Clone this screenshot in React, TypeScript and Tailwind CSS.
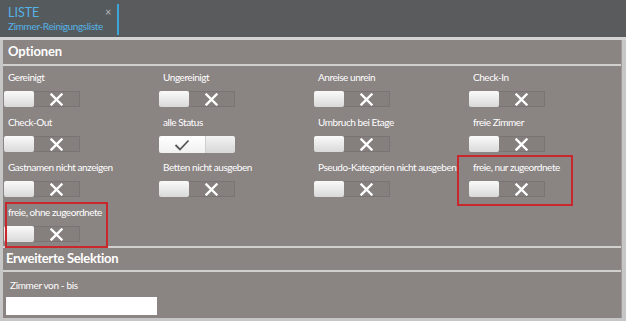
import React from "react";

const font = { fontFamily: 'Lato, "Noto Sans", sans-serif' };

function XIcon() {
  return (
    <svg width="13" height="13" viewBox="0 0 13 13">
      <path d="M1.5 1.5 L11.5 11.5 M11.5 1.5 L1.5 11.5" stroke="#ffffff" strokeWidth="2.4" strokeLinecap="square" />
    </svg>
  );
}

function CheckIcon() {
  return (
    <svg width="16" height="12" viewBox="0 0 16 12">
      <path d="M1.5 6 L6 10.5 L14.5 1.5" stroke="#555555" strokeWidth="1.8" fill="none" />
    </svg>
  );
}

function Toggle({ on }: { on?: boolean }) {
  if (on) {
    return (
      <div className="flex h-[17px] w-[76px]">
        <div className="flex w-[46px] items-center justify-center bg-gradient-to-b from-white to-[#f0f0f0] rounded-l-[2px]">
          <CheckIcon />
        </div>
        <div className="w-[30px] bg-gradient-to-b from-[#f2f2f2] to-[#d8d8d8] rounded-r-[2px] border-l border-[#cfcfcf]" />
      </div>
    );
  }
  return (
    <div className="flex h-[16px] w-[76px]">
      <div className="w-[30px] rounded-[2px] bg-gradient-to-b from-[#fafafa] to-[#d9d9d9]" />
      <div className="flex w-[46px] items-center justify-center border border-l-0 border-[#7a7574] bg-[#857f7e]">
        <XIcon />
      </div>
    </div>
  );
}

const options: { label: string; on?: boolean }[] = [
  { label: "Gereinigt" },
  { label: "Ungereinigt" },
  { label: "Anreise unrein" },
  { label: "Check-In" },
  { label: "Check-Out" },
  { label: "alle Status", on: true },
  { label: "Umbruch bei Etage" },
  { label: "freie Zimmer" },
  { label: "Gastnamen nicht anzeigen" },
  { label: "Betten nicht ausgeben" },
  { label: "Pseudo-Kategorien nicht ausgeben" },
  { label: "freie, nur zugeordnete" },
  { label: "freie, ohne zugeordnete" },
];

export default function App() {
  return (
    <div className="w-[626px] h-[321px] overflow-hidden bg-[#c6c6c6] flex flex-col" style={font}>
      {/* top bar */}
      <div className="h-[37px] shrink-0 bg-[#5a5b5c] flex">
        <div className="w-[120px] bg-[#555a5d] relative flex">
          <div className="pl-[8px] pt-[5px] flex flex-col">
            <span className="text-[12.5px] leading-[15px] text-[#56b2e6]">LISTE</span>
            <span className="text-[10px] leading-[13px] tracking-[-0.35px] text-[#56b2e6]">Zimmer-Reinigungsliste</span>
          </div>
          <span className="absolute left-[105px] top-[4px] text-[11px] text-[#b5b8ba]">×</span>
          <div className="absolute right-[1px] top-[4px] h-[31px] w-[2px] bg-[#3aa6da]" />
        </div>
      </div>
      <div className="h-[3px] shrink-0 bg-[#d4d4d4]" />
      <div className="flex-1 pl-[3px] pr-[4px] pb-[3px] flex flex-col">
        <div className="relative flex-1 bg-[#8a8483] border-r border-[#9e9998] flex flex-col">
          {/* Optionen */}
          <div className="h-[24px] shrink-0 flex items-center pl-[5px] text-[13px] tracking-[-0.1px] font-bold text-white">Optionen</div>
          <div className="h-[2px] shrink-0 bg-[#d2d0cf]" />
          <div className="grid shrink-0 grid-cols-[155px_155px_155px_155px] grid-rows-[45px_45px_45px_41px] pl-[1px] pt-[4px]">
            {options.map((o) => (
              <div key={o.label} className="flex flex-col">
                <span className="pl-[4px] text-[10px] leading-[14px] tracking-[-0.45px] text-white whitespace-nowrap">{o.label}</span>
                <div className="mt-[7px]">
                  <Toggle on={o.on} />
                </div>
              </div>
            ))}
          </div>
          <div className="h-[2px] shrink-0 bg-[#d2d0cf]" />
          {/* Erweiterte Selektion */}
          <div className="h-[22px] shrink-0 flex items-center pl-[3px] text-[13px] tracking-[-0.3px] font-bold text-white">Erweiterte Selektion</div>
          <div className="h-[2px] shrink-0 bg-[#d2d0cf]" />
          <div className="pl-[3px] pt-[6px]">
            <div className="pl-[4px] text-[10px] leading-[14px] tracking-[-0.35px] text-white">Zimmer von - bis</div>
            <div className="mt-[5px] h-[18px] w-[151px] bg-white" />
          </div>

          {/* annotation boxes */}
          <div className="absolute left-[454px] top-[115px] w-[116px] h-[51px] border-2 border-[#c8282b]" />
          <div className="absolute left-[2px] top-[162px] w-[103px] h-[46px] border-2 border-[#c8282b]" />
        </div>
      </div>
    </div>
  );
}
